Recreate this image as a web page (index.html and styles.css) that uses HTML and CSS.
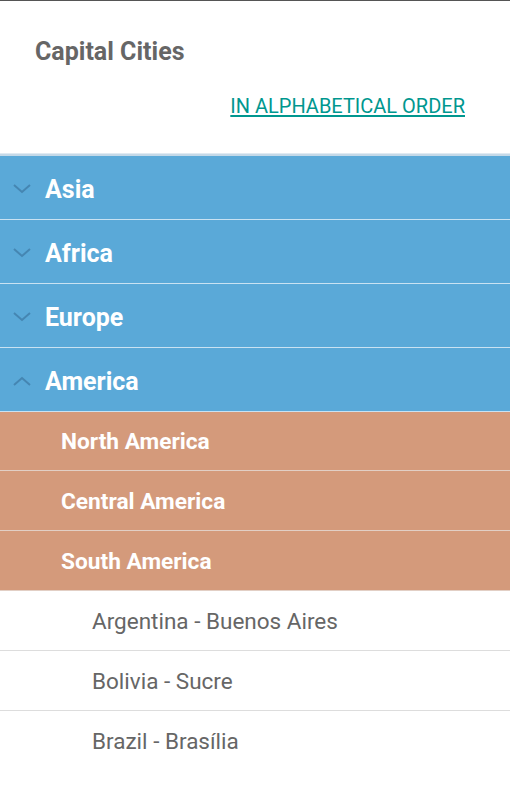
FILE: index.html
```html
<!DOCTYPE html>
<html>
<head>
<meta charset="utf-8">
<link rel="stylesheet" href="styles.css">
</head>
<body>
<div class="app">
  <header class="header">
    <h1 class="title">Capital Cities</h1>
    <div class="link-row"><a class="link" href="#">IN ALPHABETICAL ORDER</a></div>
  </header>
  <ul class="list">
    <li class="row region">
      <svg class="chev" width="18" height="10" viewBox="0 0 18 10"><path d="M1 1 L9 8 L17 1" fill="none" stroke="currentColor" stroke-width="2"/></svg>
      <span>Asia</span>
    </li>
    <li class="row region">
      <svg class="chev" width="18" height="10" viewBox="0 0 18 10"><path d="M1 1 L9 8 L17 1" fill="none" stroke="currentColor" stroke-width="2"/></svg>
      <span>Africa</span>
    </li>
    <li class="row region">
      <svg class="chev" width="18" height="10" viewBox="0 0 18 10"><path d="M1 1 L9 8 L17 1" fill="none" stroke="currentColor" stroke-width="2"/></svg>
      <span>Europe</span>
    </li>
    <li class="row region">
      <svg class="chev" width="18" height="10" viewBox="0 0 18 10"><path d="M1 9 L9 2 L17 9" fill="none" stroke="currentColor" stroke-width="2"/></svg>
      <span>America</span>
    </li>
    <li class="row sub first">North America</li>
    <li class="row sub">Central America</li>
    <li class="row sub">South America</li>
    <li class="row country">Argentina - Buenos Aires</li>
    <li class="row country">Bolivia - Sucre</li>
    <li class="row country last">Brazil - Brasília</li>
  </ul>
</div>
</body>
</html>
```

FILE: styles.css
```css
* { box-sizing: border-box; }
html, body { margin: 0; padding: 0; background: #fff; }
body { font-family: Roboto, "Noto Sans", "Liberation Sans", sans-serif; }
.app { border-top: 1px solid #555; width: 510px; }
.header {
  height: 155px;
  padding: 36px 45px 0 35px;
  border-bottom: 2px solid #c4d9e8;
  box-shadow: inset 0 -1px 0 #e0eaf2;
}
.title {
  margin: 0;
  font-size: 25px;
  line-height: 30px;
  font-weight: 700;
  color: #666;
}
.link-row { display: flex; justify-content: flex-end; margin-top: 27px; }
.link {
  color: #00978f;
  font-size: 20px;
  line-height: 24px;
  text-decoration: underline;
  text-underline-offset: 2px;
}
.list { list-style: none; margin: 0; padding: 0; }
.row { display: flex; align-items: center; }
.region {
  height: 64px;
  padding-left: 13px;
  padding-top: 3px;
  background: #5aa9d8;
  border-bottom: 1px solid #c9e2f2;
  color: #fff;
  font-size: 25px;
  font-weight: 700;
}
.region .chev { color: #4586b2; margin-right: 14px; flex: none; }
.sub {
  height: 60px;
  padding-left: 61px;
  padding-top: 1px;
  background: #d49a7b;
  border-bottom: 1px solid #e2cfc5;
  color: #fff;
  font-size: 22.7px;
  font-weight: 700;
}
.sub.first { height: 59px; }
.sub:last-of-type { border-bottom-color: #ddd; }
.country {
  height: 60px;
  padding-left: 92px;
  background: #fff;
  border-bottom: 1px solid #ddd;
  color: #666;
  font-size: 22.5px;
  font-weight: 400;
}
.country.last { border-bottom: none; }
```
